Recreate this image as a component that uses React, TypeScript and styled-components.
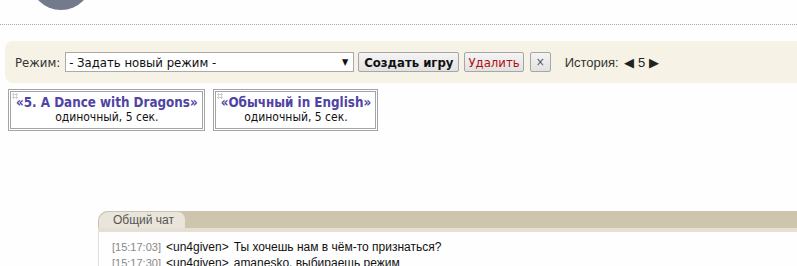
import React from "react";
import styled, { createGlobalStyle } from "styled-components";

const GlobalStyle = createGlobalStyle`
  html, body {
    margin: 0;
    padding: 0;
    background: #fefefe;
    font-family: "DejaVu Sans Condensed", "DejaVu Sans", sans-serif;
    font-size: 13px;
    color: #222;
    overflow: hidden;
  }
`;

const Page = styled.div`
  width: 797px;
  height: 266px;
  overflow: hidden;
`;

const Header = styled.div`
  height: 24px;
  position: relative;
  border-bottom: 1px dotted #aaa;
`;

const Avatar = styled.div`
  position: absolute;
  left: 30px;
  top: -52px;
  width: 62px;
  height: 62px;
  border-radius: 50%;
  background: #737a8c;
`;

const Panel = styled.div`
  margin: 16px 0 0 5px;
  height: 42px;
  background: #f6f3e6;
  border-radius: 8px 0 0 8px;
  display: flex;
  align-items: center;
  padding-left: 10px;
`;

const Label = styled.span`
  margin-right: 5px;
  color: #333;
`;

const Select = styled.div`
  width: 279px;
  height: 18px;
  border: 1px solid #a9a9a9;
  background: #fff;
  display: flex;
  align-items: center;
  justify-content: space-between;
  padding: 0 5px 0 3px;
  color: #111;
  span:last-child {
    font-size: 9px;
  }
`;

const Button = styled.button<{ $danger?: boolean; $bold?: boolean }>`
  height: 20px;
  padding: 0 5px;
  border: 1px solid #a6a6a6;
  border-radius: 2px;
  background: linear-gradient(#f4f4f4, #e2e2e2);
  font-family: "DejaVu Sans Condensed", "DejaVu Sans", sans-serif;
  font-size: 13px;
  font-weight: ${(p) => (p.$bold ? "bold" : "normal")};
  color: ${(p) => (p.$danger ? "#b01010" : "#111")};
  margin-left: 4px;
`;

const DangerButton = styled(Button)`
  padding: 0 3px;
  margin-left: 5px;
`;

const CloseButton = styled(Button)`
  font-size: 12px;
  color: #555;
  padding: 0 5px;
  margin-left: 6px;
`;

const History = styled.span`
  margin-left: 14px;
  font-family: "Liberation Sans", Arial, sans-serif;
  font-size: 13px;
  color: #333;
  b {
    font-weight: normal;
    color: #222;
    margin: 0 2px;
  }
`;

const Cards = styled.div`
  display: flex;
  gap: 8px;
  margin: 6px 0 0 8px;
`;

const Card = styled.div`
  position: relative;
  border: 3px double #a4a4a4;
  background: #fff;
  padding: 3px 4px 4px 5px;
  text-align: center;
  height: 29px;
`;

const Dots = styled.div`
  position: absolute;
  left: 1px;
  top: 1px;
  width: 6px;
  height: 6px;
  background-image: radial-gradient(circle, #cfcfcf 1px, transparent 1.2px);
  background-size: 3px 3px;
`;

const CardTitle = styled.div`
  font-weight: bold;
  font-size: 13.3px;
  color: #4f44a4;
  line-height: 16px;
`;

const CardSub = styled.div`
  font-size: 12px;
  line-height: 13px;
  color: #111;
`;

const Chat = styled.div`
  margin: 80px 0 0 98px;
`;

const TabBar = styled.div`
  display: flex;
  height: 17px;
  background: #cec5ae;
  border-radius: 10px 0 0 0;
`;

const Tab = styled.div`
  width: 88px;
  background: #e9e5da;
  border: 1px solid #cdc4ad;
  border-bottom: none;
  border-radius: 10px 8px 0 0;
  font-family: "Liberation Sans", Arial, sans-serif;
  font-size: 12px;
  color: #555;
  padding-left: 14px;
  line-height: 16px;
  box-sizing: border-box;
`;

const Strip = styled.div`
  height: 4px;
  background: #e6e0d4;
`;

const Messages = styled.div`
  border-left: 1px solid #e6e0d4;
  padding: 7px 0 0 13px;
  font-family: "Liberation Sans", Arial, sans-serif;
  font-size: 12px;
  line-height: 16px;
  color: #111;
`;

const Line = styled.div`
  white-space: nowrap;
`;

const Time = styled.span`
  font-size: 11px;
  color: #888;
  margin-right: 5px;
`;

const Nick = styled.span`
  margin-right: 5px;
`;

const messages = [
  { time: "15:17:03", nick: "un4given", text: "Ты хочешь нам в чём-то признаться?" },
  { time: "15:17:30", nick: "un4given", text: "amanesko, выбираешь режим" },
];

const cards = [
  { title: "«5. A Dance with Dragons»", sub: "одиночный, 5 сек." },
  { title: "«Обычный in English»", sub: "одиночный, 5 сек." },
];

export default function App() {
  return (
    <Page>
      <GlobalStyle />
      <Header>
        <Avatar />
      </Header>
      <Panel>
        <Label>Режим:</Label>
        <Select>
          <span>- Задать новый режим -</span>
          <span>▼</span>
        </Select>
        <Button $bold>Создать игру</Button>
        <DangerButton $danger>Удалить</DangerButton>
        <CloseButton>×</CloseButton>
        <History>
          История: <b>◀ 5 ▶</b>
        </History>
      </Panel>
      <Cards>
        {cards.map((c) => (
          <Card key={c.title}>
            <Dots />
            <CardTitle>{c.title}</CardTitle>
            <CardSub>{c.sub}</CardSub>
          </Card>
        ))}
      </Cards>
      <Chat>
        <TabBar>
          <Tab>Общий чат</Tab>
        </TabBar>
        <Strip />
        <Messages>
          {messages.map((m) => (
            <Line key={m.time}>
              <Time>[{m.time}]</Time>
              <Nick>&lt;{m.nick}&gt;</Nick>
              {m.text}
            </Line>
          ))}
        </Messages>
      </Chat>
    </Page>
  );
}
